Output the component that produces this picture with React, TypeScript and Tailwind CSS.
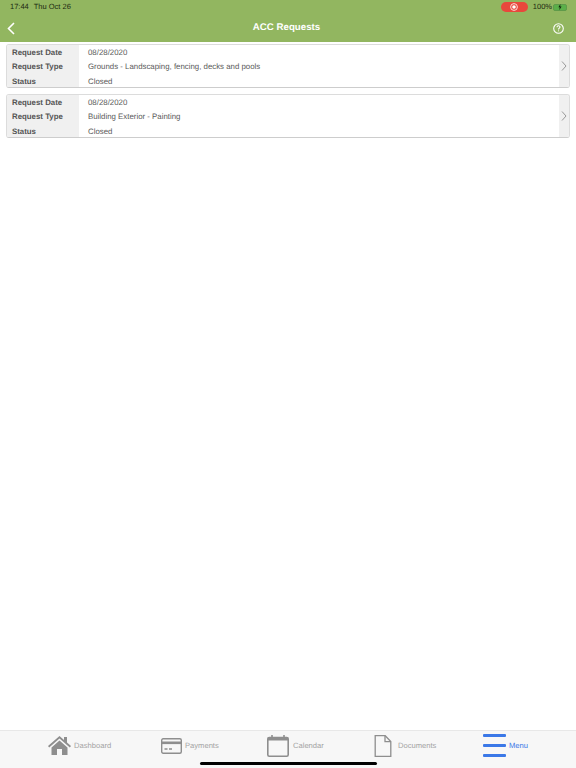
const rows = [
  ["Request Date", "08/28/2020"],
  ["Status", "Closed"],
];

function RequestCard({ type }: { type: string }) {
  const items = [rows[0], ["Request Type", type], rows[1]];
  return (
    <div className="flex h-[44px] overflow-hidden rounded-[3px] border border-[#dcdcdc] border-b-[#cdcdcd] bg-white">
      <div className="w-[72px] shrink-0 bg-[#f0f0f0] pl-[5px] pt-[0.6px]">
        {items.map(([label]) => (
          <div key={label} className="h-[14.5px] text-[7.85px] leading-[14.5px] font-bold text-[#555]">
            {label}
          </div>
        ))}
      </div>
      <div className="flex-1 pl-[9px] pt-[0.6px]">
        {items.map(([label, value]) => (
          <div key={label} className="h-[14.5px] text-[7.85px] leading-[14.5px] text-[#5a5a5a]">
            {value}
          </div>
        ))}
      </div>
      <div className="flex w-[10px] shrink-0 items-center justify-center bg-[#f0f0f0]">
        <svg width="6" height="10" viewBox="0 0 6 10" fill="none" stroke="#999" strokeWidth="1">
          <path d="M1 .5l4 4.5-4 4.5" />
        </svg>
      </div>
    </div>
  );
}

function TabItem({ icon, label, active, gap }: { icon: React.ReactNode; label: string; active?: boolean; gap: string }) {
  return (
    <div className={`flex items-center ${gap}`}>
      {icon}
      <span className={active ? "text-[7.6px] text-[#3b78e7]" : "text-[7.6px] text-[#a3a3a3]"}>{label}</span>
    </div>
  );
}

export default function App() {
  return (
    <div className="flex h-[768px] w-[576px] flex-col overflow-hidden bg-white font-['Liberation_Sans',sans-serif] [text-rendering:geometricPrecision]">
      <header className="h-[42px] shrink-0 bg-[#92b660]">
        <div className="flex h-[14px] items-center justify-between pl-[10px] pr-[9px] text-[7.5px] text-[#1c2a10]">
          <div className="flex gap-[5px]">
            <span>17:44</span>
            <span>Thu Oct 26</span>
          </div>
          <div className="flex items-center gap-[5px]">
            <div className="flex h-[10px] w-[27px] items-center justify-center rounded-full bg-[#e8483c]">
              <svg width="8" height="8" viewBox="0 0 8 8">
                <circle cx="4" cy="4" r="3.4" fill="none" stroke="#fff" strokeWidth="0.8" />
                <circle cx="4" cy="4" r="1.8" fill="#fff" />
              </svg>
            </div>
            <div className="flex items-center gap-[1px]">
              <span>100%</span>
              <div className="flex h-[7px] w-[14px] items-center justify-center rounded-[2px] border border-[#5f9a4a] bg-[#5bb04a]">
                <svg width="4" height="6" viewBox="0 0 4 6">
                  <path d="M2.4 0L.4 3.3h1.3L1.4 6l2.2-3.5H2.2z" fill="#12240a" />
                </svg>
              </div>
            </div>
          </div>
        </div>
        <div className="flex h-[28px] items-center justify-between pl-[7px] pr-[12px]">
          <div className="w-[14px]">
            <svg width="9" height="13" viewBox="0 0 9 13" fill="none" stroke="#fff" strokeWidth="1.6">
              <path d="M7 1L1.5 6.5 7 12" />
            </svg>
          </div>
          <h1 className="text-[9.7px] font-bold text-white">ACC Requests</h1>
          <div className="flex w-[12px] justify-end">
            <svg width="11" height="11" viewBox="0 0 11 11" fill="none" stroke="#fff" strokeWidth="1.1">
              <circle cx="5.5" cy="5.5" r="4.8" />
              <path d="M4 4.3c0-2 3-2 3-.2 0 1.1-1.5 1.1-1.5 2.4" />
              <path d="M5.5 7.4v.9" />
            </svg>
          </div>
        </div>
      </header>

      <main className="flex flex-1 flex-col gap-[6px] px-[6px] pt-[2.3px]">
        <RequestCard type="Grounds - Landscaping, fencing, decks and pools" />
        <RequestCard type="Building Exterior - Painting" />
      </main>

      <footer className="relative h-[38px] shrink-0 border-t border-[#e8e8e8] bg-[#f7f7f7]">
        <div className="flex h-full items-center pb-[8px] pl-[48px]">
          <div className="w-[113px]">
            <TabItem
              gap="gap-[3px]"
              label="Dashboard"
              icon={
                <svg width="23" height="19" viewBox="0 0 23 19" fill="#8e8e8e">
                  <path d="M11.5 0L0 10l1.2 1.4L11.5 2.6l10.3 8.8L23 10l-4-3.5V1h-3v3z" />
                  <path d="M3.5 11.5L11.5 4.6l8 6.9V19h-5.5v-6h-5v6H3.5z" />
                </svg>
              }
            />
          </div>
          <div className="w-[106px]">
            <TabItem
              gap="gap-[3px]"
              label="Payments"
              icon={
                <svg width="21" height="16" viewBox="0 0 21 16" fill="none" stroke="#8e8e8e" strokeWidth="1.4">
                  <rect x="0.7" y="0.7" width="19.6" height="14.6" rx="1.5" />
                  <path d="M0.7 4.8h19.6" strokeWidth="2.6" />
                  <path d="M3.5 11h3M8 11h3" />
                </svg>
              }
            />
          </div>
          <div className="w-[107px]">
            <TabItem
              gap="gap-[4px]"
              label="Calendar"
              icon={
                <svg width="22" height="22" viewBox="0 0 22 22" fill="none" stroke="#8e8e8e" strokeWidth="1.6">
                  <rect x="0.8" y="2.5" width="20.4" height="18.7" rx="1.5" />
                  <path d="M0.8 4h20.4" strokeWidth="3" />
                  <path d="M5 0v3M17 0v3" strokeWidth="1.6" />
                </svg>
              }
            />
          </div>
          <div className="w-[109px]">
            <TabItem
              gap="gap-[6px]"
              label="Documents"
              icon={
                <svg width="18" height="22" viewBox="0 0 18 22" fill="none" stroke="#8e8e8e" strokeWidth="1.3">
                  <path d="M1.2.7h10L16.8 6.5v14.8H1.2z" />
                  <path d="M11 .7v6h5.8" />
                </svg>
              }
            />
          </div>
          <TabItem
            active
            gap="gap-[3px]"
            label="Menu"
            icon={
              <svg width="23" height="23" viewBox="0 0 23 23" fill="#3b78e7">
                <rect y="0" width="23" height="3" rx="1" />
                <rect y="10" width="23" height="3" rx="1" />
                <rect y="20" width="23" height="3" rx="1" />
              </svg>
            }
          />
        </div>
        <div className="absolute bottom-[3px] left-[200px] h-[3px] w-[177px] rounded-full bg-black" />
      </footer>
    </div>
  );
}
